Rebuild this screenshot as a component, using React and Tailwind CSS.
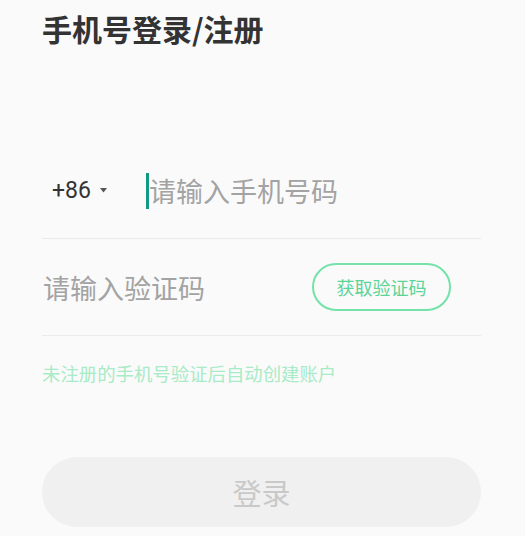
export default function App() {
  return (
    <div
      className="min-h-screen bg-[#fafafa] pl-[42px] pr-[44px]"
      style={{ fontFamily: '"Noto Sans CJK SC", "Noto Sans", sans-serif' }}
    >
      <h1 className="flex h-[56px] items-center text-[30px] font-bold leading-none text-[#333333]">
        手机号登录/注册
      </h1>

      <div className="h-[87px]" />

      {/* phone row */}
      <div className="flex h-[96px] items-center border-b border-[#ebebeb]">
        <div className="flex w-[104px] items-center pl-[10px]">
          <span className="font-['Roboto'] text-[23px] leading-none text-[#333333]">+86</span>
          <svg className="ml-[9px]" width="7" height="5" viewBox="0 0 7 5">
            <path d="M0 0 L7 0 L3.5 4.5 Z" fill="#555555" />
          </svg>
        </div>
        <div className="flex items-center">
          <span className="h-[36px] w-[3px] bg-[#109a83]" />
          <span className="text-[27px] leading-none text-[#a3a3a3]">请输入手机号码</span>
        </div>
      </div>

      {/* code row */}
      <div className="flex h-[97px] items-center justify-between border-b border-[#ebebeb] pr-[30px]">
        <span className="pl-[1px] text-[27px] leading-none text-[#a3a3a3]">请输入验证码</span>
        <button className="flex h-[48px] w-[139px] items-center justify-center rounded-full border-2 border-[#74e2a9] text-[18px] text-[#5cd497]">
          获取验证码
        </button>
      </div>

      <p className="mt-[28px] text-[18.4px] leading-none text-[#a8ebc6]">
        未注册的手机号验证后自动创建账户
      </p>

      <button className="mt-[75px] flex h-[70px] w-full items-center justify-center rounded-full bg-[#f0f0f0] text-[29px] text-[#c9c9c9]">
        登录
      </button>
    </div>
  );
}
